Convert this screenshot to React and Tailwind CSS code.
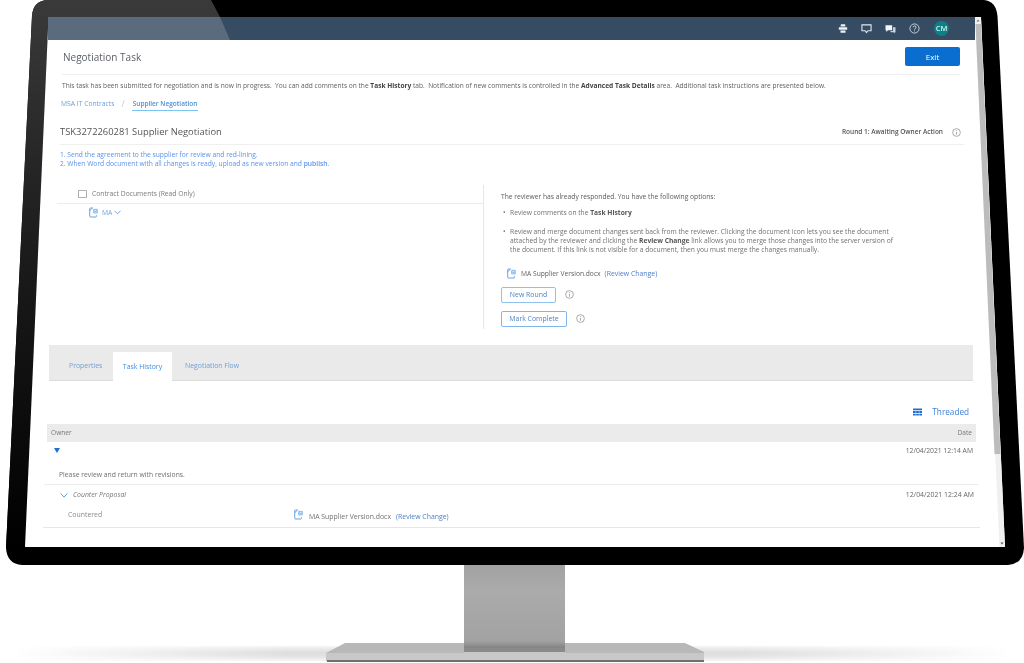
import React from 'react';

const body = "font-['Open_Sans',sans-serif]";

function Info({ className = '' }) {
    return (
        <svg viewBox="0 0 10 10" className={`w-[9px] h-[9px] shrink-0 ${className}`} fill="none" stroke="#8a8a8a" strokeWidth="0.8">
            <circle cx="5" cy="5" r="4.3" />
            <path d="M5 4.4v3M5 2.5v1" />
        </svg>
    );
}

function DocIcon({ className = '' }) {
    return (
        <svg viewBox="0 0 10 12" className={`w-[9px] h-[11px] shrink-0 ${className}`} fill="none" stroke="#3f8fe0" strokeWidth="0.9">
            <path d="M4 1H1.500a.7.7 0 0 0-.7.7v8.600a.7.7 0 0 0 .7.7h6a.7.7 0 0 0 .7-.7V9" />
            <path d="M4 1 .8 4" />
            <path d="M5.200 2.500h4v4h-4z" strokeWidth="0.7" />
            <path d="M6 3.500l.7 2 .6-1.400.6 1.400.6-2" strokeWidth="0.5" />
        </svg>
    );
}

// monitor frame, stand and floor shadow
function Monitor() {
    return (
        <svg viewBox="0 0 1024 663" className="absolute inset-0 w-[1024px] h-[663px]">
            <defs>
                <linearGradient id="neck" x1="0" y1="0" x2="0" y2="1">
                    <stop offset="0" stopColor="#a0a0a0" />
                    <stop offset="0.35" stopColor="#ababab" />
                    <stop offset="0.9" stopColor="#a2a2a2" />
                    <stop offset="1" stopColor="#7a7a7a" />
                </linearGradient>
                <linearGradient id="glare" x1="0" y1="0" x2="0" y2="1">
                    <stop offset="0" stopColor="#3a3a3a" />
                    <stop offset="0.45" stopColor="#1c1c1c" />
                    <stop offset="1" stopColor="#000000" />
                </linearGradient>
                <linearGradient id="floor" x1="0" y1="0" x2="1" y2="0">
                    <stop offset="0" stopColor="#ffffff" />
                    <stop offset="0.28" stopColor="#dcdcdc" />
                    <stop offset="0.72" stopColor="#dcdcdc" />
                    <stop offset="1" stopColor="#ffffff" />
                </linearGradient>
                <filter id="soft"><feGaussianBlur stdDeviation="3" /></filter>
            </defs>

            <rect x="10" y="648" width="1004" height="11" fill="url(#floor)" filter="url(#soft)" />

            <path d="M464 560H565V650H464Z" fill="url(#neck)" />
            <path d="M345 643H464V650H565V643H685L704 652V661H326V653Z" fill="#b8b8b8" />
            <path d="M326 653H464V652H565V653H704V660H326Z" fill="#c8c8c8" />
            <path d="M464 648H565V652H464Z" fill="#8a8a8a" />
            <path d="M327 660H704V662H327Z" fill="#6f6f6f" />

            <path d="M32 16Q33 1 47 0H984Q996 1 997.500 16L1024 548Q1023 564 1008 565H22Q7 564 6 548Z" fill="#000000" />
            <path d="M32 16Q33 1 47 0H211L220 17H48.500L25 547H6L6 548Z" fill="url(#glare)" />

            <path d="M48.500 17H981L1005 547H25Z" fill="#ffffff" />
            <path d="M975 17H981L1005 547H999.500Z" fill="#f0f0f0" />
            <path d="M975.500 24H981L1000.500 454H994.500Z" fill="#bcbcbc" />
            <path d="M976.500 21.500H979.500L978 19.500Z" fill="#777" />
            <path d="M1000.500 542.500H1003.500L1002 544.500Z" fill="#555" />
        </svg>
    );
}

export default function App() {
    return (
        <div className={`relative w-[1024px] h-[663px] overflow-hidden bg-white ${body}`}>
            <Monitor />

            <div className="relative pt-[17px] blur-[0.4px]">
                {/* top bar */}
                <div className="relative ml-[48px] w-[927px] h-[23px] bg-[#364c63] flex items-center justify-end pr-[26px] gap-[13px]">
                    <div className="absolute left-0 top-0 h-[23px] w-[182px] bg-[#5a6b7d] [clip-path:polygon(0_0,172px_0,182px_100%,0_100%)]" />
                    <svg viewBox="0 0 12 12" className="w-[10px] h-[11px]" fill="#eef2f6">
                        <path d="M3.500 1h5l.5 2.500H3zM1 4.500h10v3H1zM3 8.500h6V11H3z" />
                    </svg>
                    <svg viewBox="0 0 12 12" className="w-[11px] h-[11px]" fill="none" stroke="#dfe7ef" strokeWidth="1.2">
                        <path d="M1 2h10v6.500H7.500L6 10.500 4.500 8.500H1z" />
                    </svg>
                    <svg viewBox="0 0 12 12" className="w-[11px] h-[10px]" fill="#f4f6f8">
                        <path d="M0 1.500h8v6H3L1 9.500v-2H0z" />
                        <path d="M9 4h3v6h-1v1.500L9.500 10H6V8.500h3z" fill="#c8d2dc" />
                    </svg>
                    <svg viewBox="0 0 12 12" className="w-[11px] h-[11px]" fill="none" stroke="#dfe7ef" strokeWidth="0.9">
                        <circle cx="6" cy="6" r="5" />
                        <path d="M4.500 4.700a1.600 1.600 0 1 1 2.300 1.500c-.6.3-.8.6-.8 1.100M6 8.200v1" />
                    </svg>
                    <div className="w-[15px] h-[15px] rounded-full bg-[#0f7f86] text-[7.5px] font-semibold text-[#d8f0f0] flex items-center justify-center ml-[1px]">CM</div>
                </div>

                {/* title */}
                <div className="ml-[62px] w-[898px] h-[35px] border-b border-[#efefef] flex items-center justify-between">
                    <div className="text-[10px] text-[#5a5f66] pl-[1px] pt-[1px]">Negotiation Task</div>
                    <div className="w-[55px] h-[19px] mb-[1px] rounded-[2px] bg-[#0a6ed1] text-white text-[8px] flex items-center justify-center">Exit</div>
                </div>

                <div className="ml-[62px] h-[22px] flex items-center text-[6.6px] text-[#5f5f5f] whitespace-pre">
                    This task has been submitted for negotiation and is now in progress.  You can add comments on the <b className="text-[#444]">Task History</b> tab.  Notification of new comments is controlled in the <b className="text-[#444]">Advanced Task Details</b> area.  Additional task instructions are presented below.
                </div>

                {/* breadcrumb */}
                <div className="ml-[61px] h-[14px] flex items-start text-[6.75px] text-[#6d9fd8]">
                    <span className="mt-[2px]">MSA IT Contracts</span>
                    <span className="mt-[1px] ml-[7px] text-[#ccc] text-[9px] leading-[12px]">/</span>
                    <span className="ml-[7px] px-[1px] h-[14px] pt-[2px] border-b border-[#7cc4f0] font-semibold text-[6.5px] text-[#4a90d9]">Supplier Negotiation</span>
                </div>

                {/* task heading */}
                <div className="ml-[60px] w-[904px] h-[34px] mt-[0px] border-b border-[#efefef] flex items-center justify-between text-[#555]">
                    <div className="text-[9.4px] pt-[9px]">TSK3272260281 Supplier Negotiation</div>
                    <div className="flex items-center gap-[9px] pt-[9px] pr-[3px]">
                        <span className="text-[6.5px] font-semibold">Round 1: Awaiting Owner Action</span>
                        <Info />
                    </div>
                </div>

                <div className="ml-[60px] mt-[5px] text-[6.7px] leading-[9.2px] text-[#5b93ea]">
                    <div>1. Send the agreement to the supplier for review and red-lining.</div>
                    <div>2. When Word document with all changes is ready, upload as new version and <span className="font-semibold">publish</span>.</div>
                </div>

                {/* split panels */}
                <div className="ml-[57px] mt-[17px] h-[144px] flex">
                    <div className="w-[427px] border-r border-[#e6e6e6] text-[6.75px]">
                        <div className="h-[19px] border-b border-[#ececec] flex items-center pl-[21px] text-[#7a7a7a]">
                            <svg viewBox="0 0 10 9" className="w-[9px] h-[8px] mr-[5px]" fill="none" stroke="#8c8c8c" strokeWidth="0.8">
                                <path d="M.5.500h9v8h-9z" />
                            </svg>
                            Contract Documents (Read Only)
                        </div>
                        <div className="flex items-center pl-[32px] pt-[3px] text-[#6d9fd8]">
                            <DocIcon />
                            <span className="ml-[4px]">MA</span>
                            <svg viewBox="0 0 8 5" className="w-[7px] h-[5px] ml-[2px]" fill="none" stroke="#4a90d9" strokeWidth="0.9">
                                <path d="M.5.500 4 4 7.500 .5" />
                            </svg>
                        </div>
                    </div>

                    <div className="pl-[17px] pt-[7px] text-[6.7px] text-[#707070]">
                        <div className="text-[#5a5a5a] leading-[9.2px]">The reviewer has already responded. You have the following options:</div>
                        <div className="flex mt-[6px] leading-[9.2px]">
                            <span className="w-[9px] pl-[2px]">•</span>
                            <span>Review comments on the <b className="text-[#555]">Task History</b></span>
                        </div>
                        <div className="flex mt-[10px] w-[396px] leading-[9.2px]">
                            <span className="w-[9px] pl-[2px] shrink-0">•</span>
                            <span className="w-[387px]">Review and merge document changes sent back from the reviewer. Clicking the document icon lets you see the document attached by the reviewer and clicking the <b className="text-[#555]">Review Change</b> link allows you to merge those changes into the server version of the document. If this link is not visible for a document, then you must merge the changes manually.</span>
                        </div>
                        <div className="flex items-center mt-[14px] pl-[6px] text-[6.7px] text-[#606060]">
                            <DocIcon />
                            <span className="ml-[5px]">MA Supplier Version.docx</span>
                            <span className="ml-[4px] text-[6.9px] text-[#4a7fc8]">(Review Change)</span>
                        </div>
                        <div className="flex items-center mt-[8px]">
                            <div className="w-[55px] h-[16px] rounded-[2px] border border-[#8fc0ee] text-[#4a7fc8] text-[6.9px] flex items-center justify-center">New Round</div>
                            <Info className="ml-[9px] -mt-[2px]" />
                        </div>
                        <div className="flex items-center mt-[8px]">
                            <div className="w-[66px] h-[16px] rounded-[2px] border border-[#7fb6ec] text-[#4a7fc8] text-[6.9px] flex items-center justify-center">Mark Complete</div>
                            <Info className="ml-[9px] -mt-[2px]" />
                        </div>
                    </div>
                </div>

                {/* tabs */}
                <div className="ml-[49px] mt-[16px] w-[924px] h-[36px] bg-[#eaeaea] border-b border-[#dcdcdc] flex items-end text-[6.9px] text-[#6d9fd8]">
                    <div className="ml-[20px] w-[44px] h-[28px] flex items-center">Properties</div>
                    <div className="w-[59px] h-[29px] -mb-[1px] bg-white text-[#3f8fe0] flex items-center justify-center">Task History</div>
                    <div className="ml-[13px] h-[28px] flex items-center">Negotiation Flow</div>
                </div>

                <div className="ml-[49px] w-[920px] h-[43px] pb-[6px] flex items-end justify-end text-[8.2px] text-[#3f7fdc]">
                    <svg viewBox="0 0 10 8" className="w-[9px] h-[8px] mb-[2px] mr-[10px]" fill="#1f6fd0">
                        <path d="M0 0h10v2H0zM0 3h3v2H0zM3.500 3h3v2h-3zM7 3h3v2H7zM0 6h3v2H0zM3.500 6h3v2h-3zM7 6h3v2H7z" />
                    </svg>
                    <span className="leading-[12px]">Threaded</span>
                </div>

                {/* history table */}
                <div className="ml-[47px] w-[929px] h-[18px] bg-[#ebebeb] flex items-center justify-between px-[4px] text-[6.6px] text-[#777]">
                    <span>Owner</span>
                    <span>Date</span>
                </div>
                <div className="ml-[44px] w-[934px] h-[43px] border-b border-[#ececec] text-[6.8px] text-[#707070] relative">
                    <div className="flex justify-between pt-[4px] pr-[5px]">
                        <svg viewBox="0 0 6 5" className="ml-[10px] mt-[2px] w-[6px] h-[5px]" fill="#1f6fd0">
                            <path d="M0 0h6L3 5z" />
                        </svg>
                        <span className="text-[#666]">12/04/2021 12:14 AM</span>
                    </div>
                    <div className="ml-[15px] mt-[13px]">Please review and return with revisions.</div>
                </div>
                <div className="ml-[43px] w-[937px] h-[43px] border-b border-[#e6e6e6] text-[6.9px] text-[#707070]">
                    <div className="flex items-center justify-between pt-[5px] pr-[6px]">
                        <div className="flex items-center">
                            <svg viewBox="0 0 9 6" className="ml-[17px] w-[8px] h-[5px]" fill="none" stroke="#4a90d9" strokeWidth="1">
                                <path d="M.5.500 4.500 5 8.500 .5" />
                            </svg>
                            <i className="ml-[5px] text-[#777]">Counter Proposal</i>
                        </div>
                        <span className="text-[#666]">12/04/2021 12:24 AM</span>
                    </div>
                    <div className="flex items-start mt-[9px]">
                        <span className="ml-[25px] w-[226px] text-[#8a8a8a]">Countered</span>
                        <DocIcon className="-mt-[1px]" />
                        <span className="ml-[6px] mt-[2px]">MA Supplier Version.docx</span>
                        <span className="ml-[5px] mt-[2px] text-[#4a7fc8]">(Review Change)</span>
                    </div>
                </div>
            </div>
        </div>
    );
}
